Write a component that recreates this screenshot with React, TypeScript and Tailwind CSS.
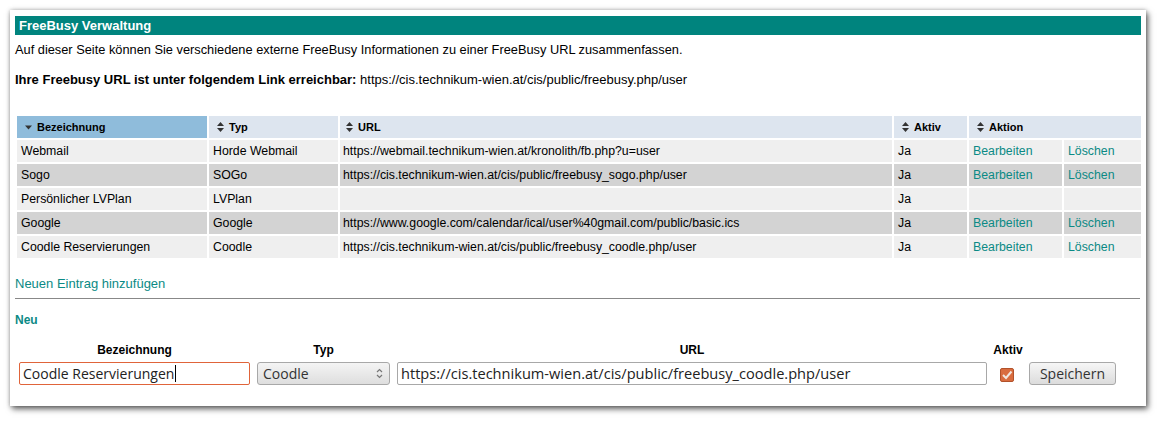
import React from "react";

const TEAL = "text-[#0b8a85]";

const SortBoth = () => (
  <svg width="7" height="10" viewBox="0 0 7 10" className="inline-block mr-[5px] -mt-[2px] align-middle">
    <path d="M3.5 0 L7 4 L0 4 Z" fill="#333" />
    <path d="M3.5 10 L7 6 L0 6 Z" fill="#333" />
  </svg>
);

const SortDown = () => (
  <svg width="7" height="10" viewBox="0 0 7 10" className="inline-block mr-[5px] -mt-[2px] align-middle">
    <path d="M0 3.5 L7 3.5 L3.5 7.5 Z" fill="#333" />
  </svg>
);

const rows = [
  { name: "Webmail", typ: "Horde Webmail", url: "https://webmail.technikum-wien.at/kronolith/fb.php?u=user", edit: true },
  { name: "Sogo", typ: "SOGo", url: "https://cis.technikum-wien.at/cis/public/freebusy_sogo.php/user", edit: true },
  { name: "Persönlicher LVPlan", typ: "LVPlan", url: "", edit: false },
  { name: "Google", typ: "Google", url: "https://www.google.com/calendar/ical/user%40gmail.com/public/basic.ics", edit: true },
  { name: "Coodle Reservierungen", typ: "Coodle", url: "https://cis.technikum-wien.at/cis/public/freebusy_coodle.php/user", edit: true },
];

export default function App() {
  return (
    <div className="w-[1162px] h-[422px] bg-white overflow-hidden pt-[10px] pl-[10px] font-['Liberation_Sans',Arial,sans-serif] text-[12px] text-black">
      <div className="w-[1136px] h-[396px] bg-white shadow-[2px_3px_6px_rgba(0,0,0,0.6),0_0_4px_rgba(0,0,0,0.25)] px-[5px] pt-[6px]">
        <div className="h-[19px] bg-[#00847e] text-white font-bold text-[13px] leading-[19px] pl-[4px]">
          FreeBusy Verwaltung
        </div>
        <p className="mt-[8px] leading-[14px] text-[12.8px]">
          Auf dieser Seite können Sie verschiedene externe FreeBusy Informationen zu einer FreeBusy URL zusammenfassen.
        </p>
        <p className="mt-[15px] leading-[15px] text-[13px]">
          <b>Ihre Freebusy URL ist unter folgendem Link erreichbar:</b> https://cis.technikum-wien.at/cis/public/freebusy.php/user
        </p>

        <table className="mt-[27px] w-[1126px] table-fixed border-separate border-spacing-[2px] text-[12.3px]">
          <colgroup>
            <col className="w-[190px]" />
            <col className="w-[129px]" />
            <col className="w-[552px]" />
            <col className="w-[73px]" />
            <col className="w-[93px]" />
            <col className="w-[77px]" />
          </colgroup>
          <thead>
            <tr className="h-[22px] text-[11px] font-bold text-left">
              <th className="bg-[#8fbcdb] pl-[8px]"><SortDown />Bezeichnung</th>
              <th className="bg-[#dde5ef] pl-[8px]"><SortBoth />Typ</th>
              <th className="bg-[#dde5ef] pl-[6px]"><SortBoth />URL</th>
              <th className="bg-[#dde5ef] pl-[8px]"><SortBoth />Aktiv</th>
              <th colSpan={2} className="bg-[#dde5ef] pl-[8px]"><SortBoth />Aktion</th>
            </tr>
          </thead>
          <tbody>
            {rows.map((r, i) => (
              <tr key={r.name} className={`h-[22px] ${i % 2 === 0 ? "bg-[#efefef]" : "bg-[#d3d3d3]"}`}>
                <td className="pl-[4px] pt-[1px]">{r.name}</td>
                <td className="pl-[4px] pt-[1px]">{r.typ}</td>
                <td className="pl-[3px] pt-[1px]">{r.url}</td>
                <td className="pl-[4px] pt-[1px]">Ja</td>
                <td className={`pl-[4px] pt-[1px] ${TEAL}`}>{r.edit ? "Bearbeiten" : ""}</td>
                <td className={`pl-[4px] pt-[1px] ${TEAL}`}>{r.edit ? "Löschen" : ""}</td>
              </tr>
            ))}
          </tbody>
        </table>

        <div className={`mt-[16px] leading-[15px] text-[13px] ${TEAL}`}>Neuen Eintrag hinzufügen</div>
        <div className="mt-[7px] h-px bg-[#888] w-[1125px]" />
        <div className={`mt-[14px] leading-[14px] font-bold ${TEAL}`}>Neu</div>

        <div className="mt-[17px] ml-[4px] flex items-start">
          <div className="w-[231px] flex flex-col items-center">
            <div className="font-bold text-[12px] leading-[12px]">Bezeichnung</div>
            <div className="mt-[6px] w-[231px] h-[23px] border border-[#e0643a] rounded-[2px] flex items-center pl-[3px] font-['Open_Sans',sans-serif] text-[14px] text-[#222]">
              Coodle Reservierungen<span className="w-px h-[17px] bg-black ml-[1px]" />
            </div>
          </div>
          <div className="ml-[7px] w-[133px] flex flex-col items-center">
            <div className="font-bold text-[12px] leading-[12px]">Typ</div>
            <div className="mt-[6px] w-[133px] h-[23px] border border-[#a8a8a8] rounded-[3px] bg-gradient-to-b from-[#f4f4f4] to-[#dedede] flex items-center justify-between pl-[5px] pr-[6px] font-['Open_Sans',sans-serif] text-[14px] text-[#333]">
              Coodle
              <svg width="7" height="11" viewBox="0 0 7 11">
                <path d="M1 4 L3.5 1.5 L6 4" fill="none" stroke="#777" strokeWidth="1.2" />
                <path d="M1 7 L3.5 9.5 L6 7" fill="none" stroke="#777" strokeWidth="1.2" />
              </svg>
            </div>
          </div>
          <div className="ml-[7px] w-[590px] flex flex-col items-center">
            <div className="font-bold text-[12px] leading-[12px]">URL</div>
            <div className="mt-[6px] w-[590px] h-[23px] border border-[#a8a8a8] rounded-[2px] flex items-center pl-[3px] font-['Open_Sans',sans-serif] text-[14.6px] text-[#222]">
              https://cis.technikum-wien.at/cis/public/freebusy_coodle.php/user
            </div>
          </div>
          <div className="ml-[6px] w-[30px] flex flex-col items-center">
            <div className="font-bold text-[12px] leading-[12px]">Aktiv</div>
            <div className="mt-[12px] -ml-[2px]">
              <svg width="14" height="14" viewBox="0 0 14 14">
                <rect x="0.5" y="0.5" width="13" height="13" rx="1.5" fill="#d96c3f" stroke="#b2522b" />
                <path d="M3 7 L6 10 L11.5 3.5" fill="none" stroke="#f1e6df" strokeWidth="2" />
              </svg>
            </div>
          </div>
          <div className="ml-[6px] pt-[18px]">
            <button className="w-[87px] h-[23px] border border-[#a8a8a8] rounded-[3px] bg-gradient-to-b from-[#f6f6f6] to-[#dcdcdc] font-['Open_Sans',sans-serif] text-[14px] text-[#333] leading-[20px]">
              Speichern
            </button>
          </div>
        </div>
      </div>
    </div>
  );
}
